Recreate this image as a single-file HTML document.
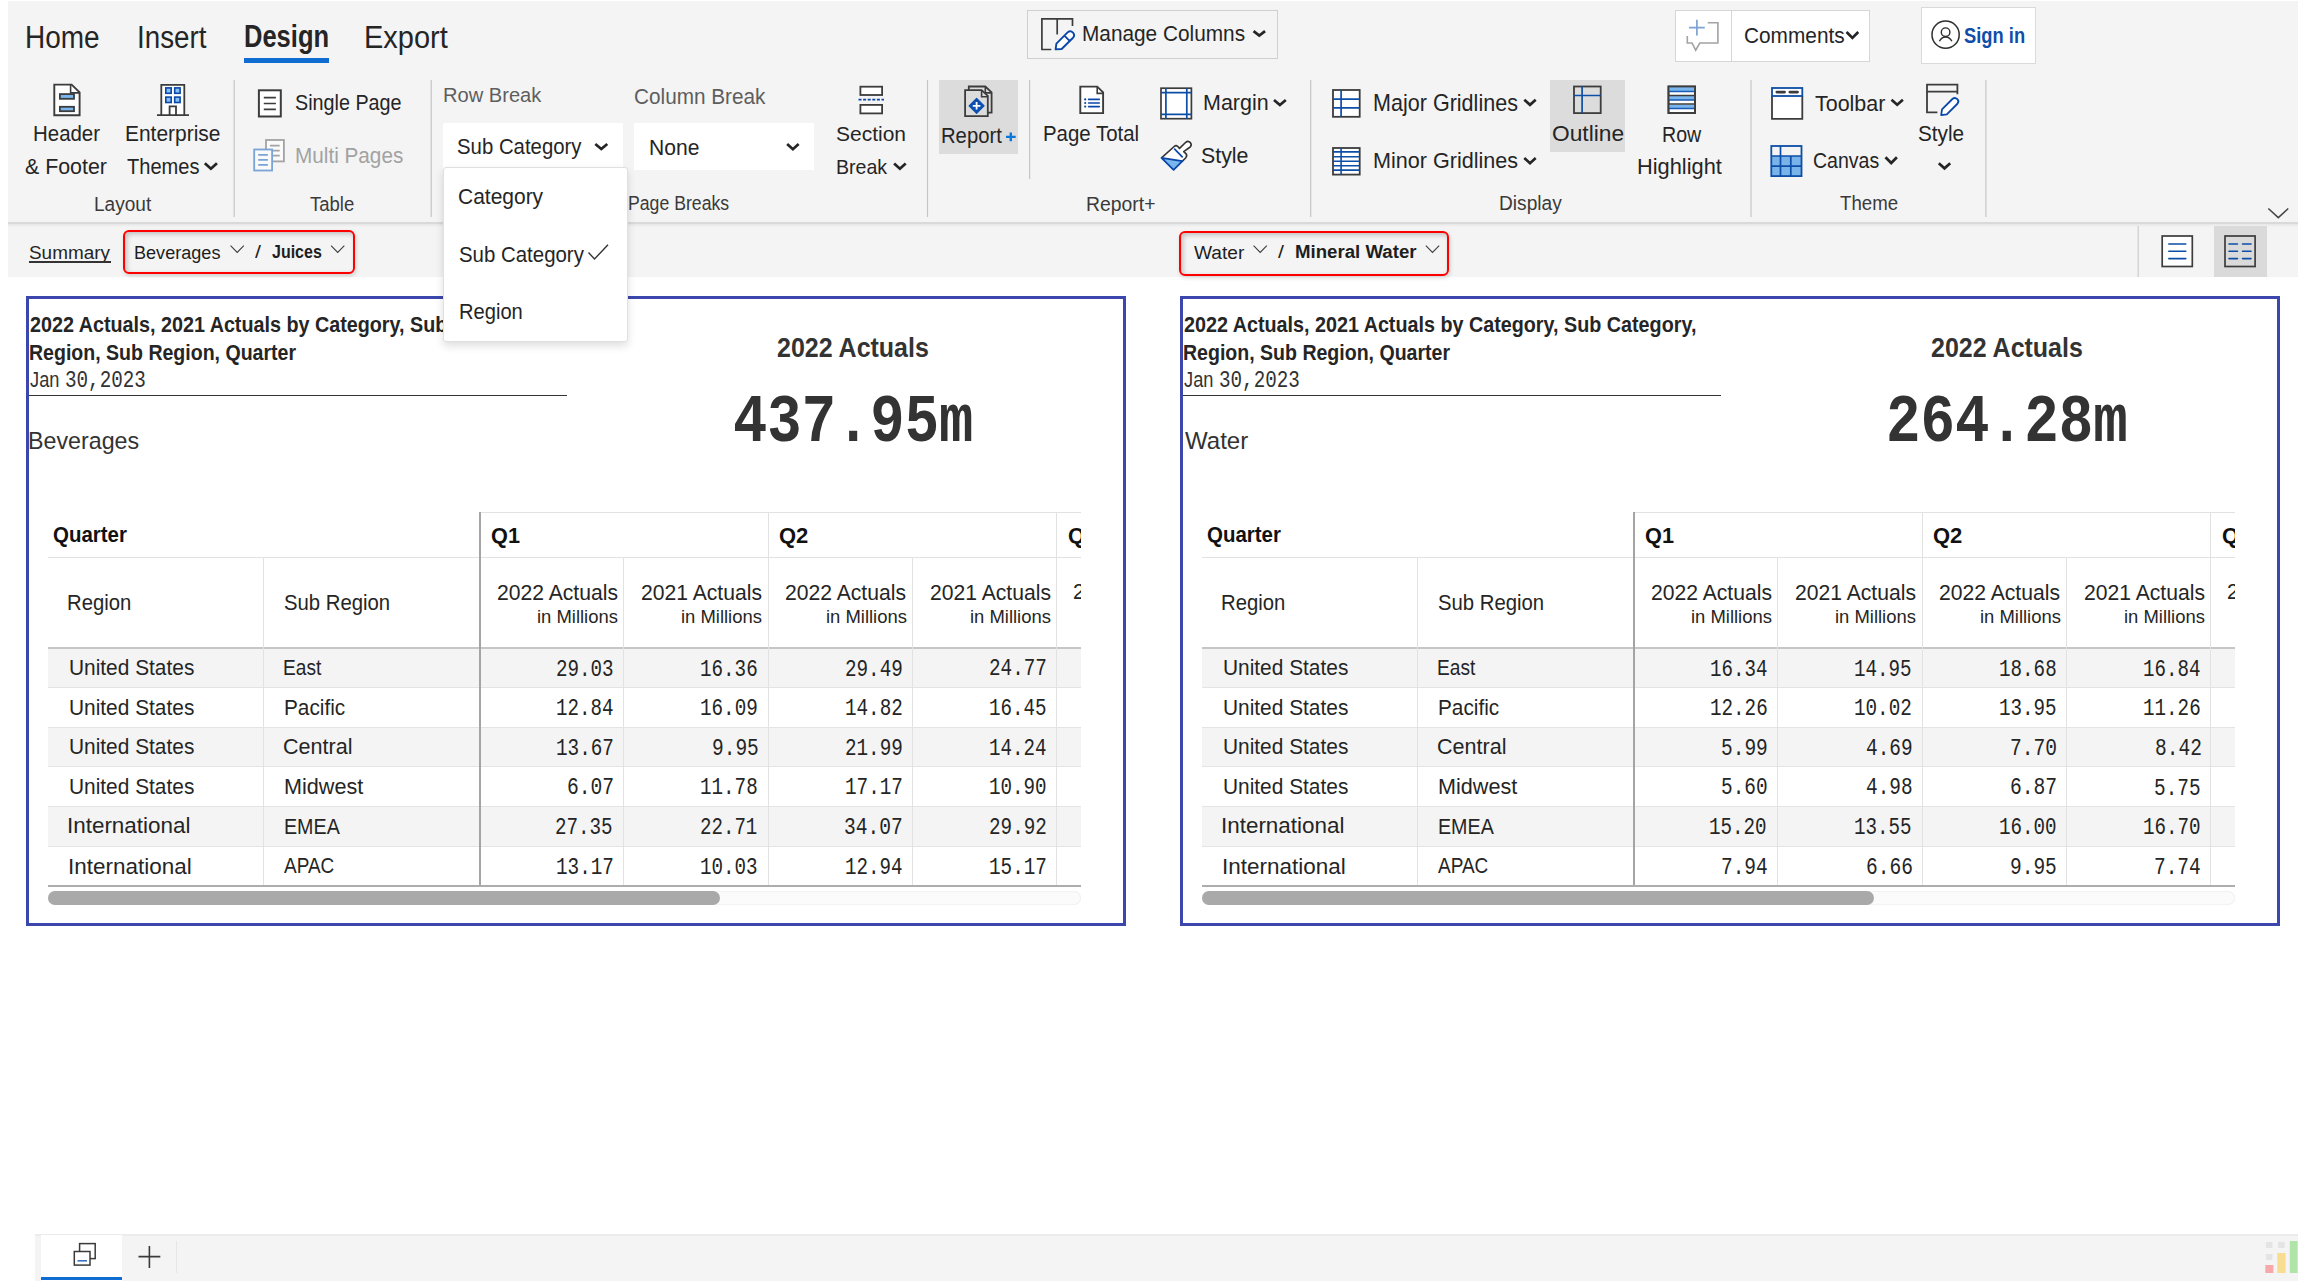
<!DOCTYPE html>
<html><head><meta charset="utf-8"><title>Report Designer</title>
<style>
html,body{margin:0;padding:0;width:2304px;height:1288px;overflow:hidden;background:#fff;}
body{position:relative;font-family:"Liberation Sans",sans-serif;color:#252525;}
.t{position:absolute;white-space:nowrap;line-height:1;transform-origin:0 0;}
.r{position:absolute;}
svg.ov{position:absolute;left:0;top:0;}
</style></head><body>
<div class="r" style="left:8px;top:1px;width:2290px;height:222px;background:#f4f4f4;"></div><div class="r" style="left:8px;top:222px;width:2290px;height:2px;background:#d9d9d9;"></div><div class="r" style="left:8px;top:224px;width:2290px;height:53px;background:#f4f4f4;"></div><div class="r" style="left:8px;top:224px;width:2290px;height:3px;background:linear-gradient(#e6e6e6,#f4f4f4);"></div><div class="t b0" style="left:25.31px;top:22.68px;font-size:30.81px;transform:scaleX(0.9082);">Home</div><div class="t b0" style="left:136.53px;top:22.68px;font-size:30.81px;transform:scaleX(0.9005);">Insert</div><div class="t b0" style="left:244.37px;top:22.25px;font-size:30.81px;transform:scaleX(0.8283);font-weight:bold;">Design</div><div class="t b0" style="left:364.48px;top:22.54px;font-size:30.81px;transform:scaleX(0.9414);">Export</div><div class="r" style="left:244px;top:58px;width:85px;height:4.5px;background:#0f6cd0;"></div><div class="r" style="left:1027px;top:10px;width:251px;height:49px;background:transparent;box-sizing:border-box;border:1px solid #cfcfcf;"></div><div class="t b0" style="left:1082.01px;top:23.40px;font-size:21.22px;transform:scaleX(0.9804);">Manage Columns</div><div class="r" style="left:1675px;top:10px;width:195px;height:52px;background:#fff;box-sizing:border-box;border:1px solid #d6d6d6;"></div><div class="r" style="left:1731px;top:10px;width:1px;height:52px;background:#d6d6d6;"></div><div class="t b0" style="left:1743.96px;top:23.58px;font-size:22.67px;transform:scaleX(0.9192);">Comments</div><div class="r" style="left:1921px;top:7px;width:115px;height:57px;background:#fff;box-sizing:border-box;border:1px solid #dadada;"></div><div class="t b0" style="left:1964.32px;top:25.08px;font-size:22.09px;transform:scaleX(0.8302);color:#0f4ea8;font-weight:bold;">Sign in</div><div class="t b0" style="left:33.49px;top:123.46px;font-size:22.09px;transform:scaleX(0.9257);">Header</div><div class="t b0" style="left:24.88px;top:155.71px;font-size:22.09px;transform:scaleX(0.9678);">&amp; Footer</div><div class="t b0" style="left:125.20px;top:123.28px;font-size:22.09px;transform:scaleX(0.9484);">Enterprise</div><div class="t b0" style="left:127.45px;top:156.06px;font-size:22.09px;transform:scaleX(0.9094);">Themes</div><div class="t b0" style="left:93.75px;top:193.59px;font-size:20.35px;transform:scaleX(0.9364);color:#3a3a3a;">Layout</div><div class="t b0" style="left:294.71px;top:92.30px;font-size:21.22px;transform:scaleX(0.9311);">Single Page</div><div class="t b0" style="left:294.72px;top:145.30px;font-size:21.22px;transform:scaleX(0.9768);color:#a2a2a2;">Multi Pages</div><div class="t b0" style="left:310.45px;top:193.91px;font-size:20.35px;transform:scaleX(0.9102);color:#3a3a3a;">Table</div><div class="t b0" style="left:442.92px;top:84.35px;font-size:21.08px;transform:scaleX(0.9540);color:#5e5e5e;">Row Break</div><div class="r" style="left:443px;top:123px;width:180px;height:47px;background:#fff;"></div><div class="t b0" style="left:457.38px;top:135.68px;font-size:21.80px;transform:scaleX(0.9340);">Sub Category</div><div class="t b0" style="left:633.64px;top:85.57px;font-size:22.53px;transform:scaleX(0.9217);color:#5e5e5e;">Column Break</div><div class="r" style="left:634px;top:123px;width:180px;height:47px;background:#fff;"></div><div class="t b0" style="left:648.66px;top:136.60px;font-size:21.95px;transform:scaleX(0.9603);">None</div><div class="t b0" style="left:835.70px;top:124.11px;font-size:20.93px;transform:scaleX(1.0033);">Section</div><div class="t b0" style="left:836.36px;top:156.56px;font-size:20.93px;transform:scaleX(0.9357);">Break</div><div class="t b0" style="left:628.36px;top:192.82px;font-size:20.35px;transform:scaleX(0.8683);color:#3a3a3a;">Page Breaks</div><div class="r" style="left:939px;top:80px;width:79px;height:74px;background:#dcdcdc;"></div><div class="t b0" style="left:940.63px;top:124.78px;font-size:21.22px;transform:scaleX(0.9540);">Report</div><div class="t b0" style="left:1043.49px;top:123.30px;font-size:21.22px;transform:scaleX(0.9624);">Page Total</div><div class="t b0" style="left:1203.31px;top:91.45px;font-size:22.97px;transform:scaleX(0.9344);">Margin</div><div class="t b0" style="left:1201.44px;top:145.12px;font-size:22.38px;transform:scaleX(0.9547);">Style</div><div class="t b0" style="left:1085.52px;top:193.54px;font-size:20.35px;transform:scaleX(0.9521);color:#3a3a3a;">Report+</div><div class="t b0" style="left:1373.15px;top:91.65px;font-size:23.26px;transform:scaleX(0.9271);">Major Gridlines</div><div class="t b0" style="left:1373.40px;top:150.44px;font-size:22.24px;transform:scaleX(0.9709);">Minor Gridlines</div><div class="r" style="left:1550px;top:80px;width:75px;height:72px;background:#dcdcdc;"></div><div class="t b0" style="left:1551.55px;top:123.46px;font-size:22.09px;transform:scaleX(1.0305);">Outline</div><div class="t b0" style="left:1661.56px;top:123.61px;font-size:22.09px;transform:scaleX(0.8878);">Row</div><div class="t b0" style="left:1637.35px;top:156.08px;font-size:22.09px;transform:scaleX(0.9875);">Highlight</div><div class="t b0" style="left:1499.12px;top:193.02px;font-size:20.35px;transform:scaleX(0.9403);color:#3a3a3a;">Display</div><div class="t b0" style="left:1815.22px;top:92.69px;font-size:22.24px;transform:scaleX(0.9650);">Toolbar</div><div class="t b0" style="left:1813.25px;top:148.78px;font-size:22.97px;transform:scaleX(0.8503);">Canvas</div><div class="t b0" style="left:1918.39px;top:122.88px;font-size:22.09px;transform:scaleX(0.9395);">Style</div><div class="t b0" style="left:1840.35px;top:193.36px;font-size:20.35px;transform:scaleX(0.9173);color:#3a3a3a;">Theme</div><svg class="ov" width="2304" height="1288" viewBox="0 0 2304 1288"><polyline points="1253.54,31.14 1259.30,35.64 1265.06,31.14" fill="none" stroke="#252525" stroke-width="2.7" stroke-linecap="butt" stroke-linejoin="miter"/><path d="M1051.3 49.5 H1041.9 V18.9 H1072.5 V26 M1057.2 18.9 V34.5" fill="none" stroke="#3c3c3c" stroke-width="1.7"/><path d="M1055.6 49.4 L1056.4 43.6 L1067.6 32.4 Q1070.4 30.0 1073.0 32.6 Q1075.4 35.3 1072.8 38.0 L1061.6 49.0 Z M1064.4 35.6 L1069.6 40.8" fill="#fff" stroke="#0b47a8" stroke-width="1.9" stroke-linejoin="round"/><polyline points="1846.55,32.05 1852.40,37.84 1858.26,32.05" fill="none" stroke="#252525" stroke-width="2.7" stroke-linecap="butt" stroke-linejoin="miter"/><path d="M1696.9 19.8 V35.5 M1689 27.7 H1704.8" stroke="#7da2d4" stroke-width="1.7" fill="none"/><path d="M1707.7 22.7 H1717.9 V43 H1699.8 L1695.7 50.2 L1692 43 H1687.3 V35.9" stroke="#a3a3a3" stroke-width="1.6" fill="none"/><circle cx="1945.6" cy="34.7" r="13.6" fill="none" stroke="#2e2e2e" stroke-width="1.5"/><circle cx="1945.6" cy="32.2" r="4.3" fill="none" stroke="#2e2e2e" stroke-width="1.4"/><path d="M1939.4 41.3 Q1941.5 37 1945.6 37 Q1949.8 37 1951.9 41.3" fill="none" stroke="#2e2e2e" stroke-width="1.4"/><line x1="234.2" y1="80" x2="234.2" y2="217" stroke="#c6c6c6" stroke-width="1.2"/><line x1="431.2" y1="80" x2="431.2" y2="217" stroke="#c6c6c6" stroke-width="1.2"/><line x1="927.5" y1="80" x2="927.5" y2="217" stroke="#c6c6c6" stroke-width="1.2"/><line x1="1029.6" y1="80" x2="1029.6" y2="179" stroke="#c6c6c6" stroke-width="1.2"/><line x1="1310.7" y1="80" x2="1310.7" y2="217" stroke="#c6c6c6" stroke-width="1.2"/><line x1="1751" y1="80" x2="1751" y2="217" stroke="#c6c6c6" stroke-width="1.2"/><line x1="1985.9" y1="80" x2="1985.9" y2="217" stroke="#c6c6c6" stroke-width="1.2"/><path d="M54.3 84.6 H71.6 L79.6 92.4 V115.3 H54.3 Z" fill="#fff" stroke="#3c3c3c" stroke-width="1.9" stroke-linejoin="miter"/><path d="M70.6 84.6 V92.9 H79.6" fill="none" stroke="#3c3c3c" stroke-width="1.6"/><rect x="59.9" y="94.1" width="14.1" height="4.7" fill="#7ab6ee" stroke="#3c3c3c" stroke-width="1.8"/><rect x="59.9" y="106.8" width="14.1" height="4.4" fill="#7ab6ee" stroke="#3c3c3c" stroke-width="1.8"/><path d="M161.3 115.2 V84.8 H184.3 V115.2 M157 115.2 H189 M169.6 115.2 V106.4 H176 V115.2" fill="#fff" stroke="#3c3c3c" stroke-width="1.8"/><rect x="165.8" y="87.9" width="5.4" height="5.4" fill="#84c0f2" stroke="#0b47a8" stroke-width="1.6"/><rect x="165.8" y="97.1" width="5.4" height="5.4" fill="#84c0f2" stroke="#0b47a8" stroke-width="1.6"/><rect x="174.7" y="87.9" width="5.4" height="5.4" fill="#84c0f2" stroke="#0b47a8" stroke-width="1.6"/><rect x="174.7" y="97.1" width="5.4" height="5.4" fill="#84c0f2" stroke="#0b47a8" stroke-width="1.6"/><polyline points="204.84,163.25 210.90,168.75 216.96,163.25" fill="none" stroke="#252525" stroke-width="2.7" stroke-linecap="butt" stroke-linejoin="miter"/><rect x="258.9" y="90.3" width="21.9" height="26.2" fill="#fff" stroke="#3c3c3c" stroke-width="2"/><path d="M263.8 97.6 H275.9 M263.8 103.5 H275.9 M263.8 109.4 H275.9" stroke="#3c3c3c" stroke-width="1.7"/><rect x="266" y="140" width="17.9" height="21.4" fill="#fafafa" stroke="#a3a3a3" stroke-width="1.8"/><path d="M270 145.7 H279.7 M270 150.6 H279.7 M270 155.7 H279.7" stroke="#a3a3a3" stroke-width="1.7"/><rect x="254.2" y="149.5" width="17.9" height="21" fill="#fafafa" stroke="#7aa3d8" stroke-width="1.8"/><path d="M258.2 154.9 H267.9 M258.2 159.9 H267.9 M258.2 164.9 H267.9" stroke="#7aa3d8" stroke-width="1.7"/><polyline points="595.29,143.90 601.30,149.09 607.30,143.90" fill="none" stroke="#252525" stroke-width="2.7" stroke-linecap="butt" stroke-linejoin="miter"/><polyline points="787.14,143.94 792.90,149.25 798.65,143.94" fill="none" stroke="#252525" stroke-width="2.7" stroke-linecap="butt" stroke-linejoin="miter"/><rect x="860.4" y="86.7" width="21.7" height="8.3" fill="#fff" stroke="#3c3c3c" stroke-width="1.8"/><rect x="860.4" y="104.9" width="21.7" height="8.5" fill="#fff" stroke="#3c3c3c" stroke-width="1.8"/><line x1="858.5" y1="99.6" x2="884" y2="99.6" stroke="#0b47a8" stroke-width="1.6" stroke-dasharray="3 1.6"/><polyline points="894.10,163.44 899.90,168.75 905.70,163.44" fill="none" stroke="#252525" stroke-width="2.7" stroke-linecap="butt" stroke-linejoin="miter"/><path d="M968.8 112.6 V86.5 H985.3 L991.6 92.4 V112.6 H987.8" fill="#dcdcdc" stroke="#3c3c3c" stroke-width="1.8"/><path d="M985.3 86.5 V92.9 H991.6" fill="none" stroke="#3c3c3c" stroke-width="1.6"/><path d="M965.1 90.2 H981.6 L987.8 95.9 V116.2 H965.1 Z" fill="#dcdcdc" stroke="#3c3c3c" stroke-width="1.8"/><path d="M981.6 90.2 V96.8 H987.8" fill="none" stroke="#3c3c3c" stroke-width="1.6"/><path d="M976.6 98.3 L984.1 105.8 L976.6 113.3 L969.1 105.8 Z" fill="#0c4fb0" stroke="#0c4fb0" stroke-width="1.2" stroke-linejoin="round"/><path d="M976.6 102 V109.6 M972.8 105.8 H980.4" stroke="#fff" stroke-width="1.8"/><path d="M1010.8 132.6 V141.2 M1006 136.9 H1015.7" stroke="#0a78d8" stroke-width="2.4"/><path d="M1080.3 86.6 H1097.2 L1103.1 92.4 V113.1 H1080.3 Z" fill="#fff" stroke="#3c3c3c" stroke-width="1.9"/><path d="M1097.2 86.6 V93.4 H1103.1" fill="none" stroke="#3c3c3c" stroke-width="1.6"/><circle cx="1085.2" cy="99.4" r="1.1" fill="#0b47a8"/><line x1="1088.6" y1="99.4" x2="1099.3" y2="99.4" stroke="#0b47a8" stroke-width="1.6" stroke-linecap="round"/><circle cx="1085.2" cy="103" r="1.1" fill="#0b47a8"/><line x1="1088.6" y1="103" x2="1099.3" y2="103" stroke="#0b47a8" stroke-width="1.6" stroke-linecap="round"/><circle cx="1085.2" cy="106.6" r="1.1" fill="#0b47a8"/><line x1="1088.6" y1="106.6" x2="1099.3" y2="106.6" stroke="#0b47a8" stroke-width="1.6" stroke-linecap="round"/><rect x="1161" y="88.2" width="30.4" height="30.5" fill="#fff" stroke="#3c3c3c" stroke-width="1.7"/><path d="M1165.9 88.2 V118.7 M1186.8 88.2 V118.7 M1161 92.6 H1191.4 M1161 114.4 H1191.4" stroke="#0d4ea6" stroke-width="1.7"/><polyline points="1274.00,100.00 1279.90,105.00 1285.81,100.00" fill="none" stroke="#252525" stroke-width="2.7" stroke-linecap="butt" stroke-linejoin="miter"/><path d="M1161.5 157.8 L1174.2 146.5 Q1176.0 144.9 1177.8 146.5 L1179.5 148.4 L1185.8 142.3 Q1188.2 140.3 1190.3 142.6 Q1192.2 144.9 1190.2 147.0 L1183.7 151.6 L1185.9 153.6 Q1187.6 155.8 1185.6 158.0 L1182.4 161.1" fill="#fff" stroke="#333" stroke-width="1.6" stroke-linejoin="round"/><path d="M1161.5 157.8 L1182.4 161.1 L1173.6 169.9 Z" fill="#7ab6ee" stroke="#0b47a8" stroke-width="1.8" stroke-linejoin="round"/><line x1="1174.2" y1="148.6" x2="1182.7" y2="157.4" stroke="#0b47a8" stroke-width="1.7"/><rect x="1333" y="90" width="26.7" height="26.8" fill="#fff" stroke="#3c3c3c" stroke-width="1.8"/><path d="M1341.1 90 V116.8 M1333 99.1 H1359.7 M1333 107.9 H1359.7" stroke="#0d4ea6" stroke-width="1.7"/><polyline points="1524.29,99.74 1530.00,104.85 1535.71,99.74" fill="none" stroke="#252525" stroke-width="2.7" stroke-linecap="butt" stroke-linejoin="miter"/><rect x="1333" y="148" width="26.7" height="26.6" fill="#fff" stroke="#3c3c3c" stroke-width="1.8"/><path d="M1341.1 148 V174.6 M1333 151.9 H1359.7 M1333 156.8 H1359.7 M1333 161.2 H1359.7 M1333 165.7 H1359.7 M1333 170.1 H1359.7" stroke="#0d4ea6" stroke-width="1.6"/><polyline points="1524.29,158.04 1530.00,163.15 1535.71,158.04" fill="none" stroke="#252525" stroke-width="2.7" stroke-linecap="butt" stroke-linejoin="miter"/><rect x="1574" y="86.5" width="26.7" height="26.6" fill="#dcdcdc" stroke="#3c3c3c" stroke-width="1.8"/><path d="M1582.1 86.5 V113.1 M1574 95.5 H1600.7" stroke="#0d4ea6" stroke-width="1.7"/><rect x="1668.5" y="86.5" width="26.5" height="26.5" fill="#fff" stroke="#3c3c3c" stroke-width="1.8"/><rect x="1668.5" y="86.5" width="26.5" height="5" fill="#7ab6ee"/><rect x="1668.5" y="96" width="26.5" height="4" fill="#7ab6ee"/><rect x="1668.5" y="104.5" width="26.5" height="4" fill="#7ab6ee"/><path d="M1668.5 91.5 H1695 M1668.5 100 H1695 M1668.5 108.5 H1695" stroke="#1a5bb5" stroke-width="1.5"/><path d="M1668.5 95.4 H1695 M1668.5 104 H1695" stroke="#3c3c3c" stroke-width="1.5"/><rect x="1668.5" y="86.5" width="26.5" height="26.5" fill="none" stroke="#3c3c3c" stroke-width="1.8"/><path d="M1772 96 V118.8 H1802.3 V96" fill="#fff" stroke="#3c3c3c" stroke-width="1.8"/><rect x="1772" y="88" width="30.3" height="8" fill="#fff" stroke="#0d4ea6" stroke-width="1.8"/><path d="M1776.8 92.1 H1784.6 M1789.8 92.1 H1797.6" stroke="#3c3c3c" stroke-width="2.6" stroke-linecap="round"/><polyline points="1891.49,99.69 1897.20,104.69 1902.91,99.69" fill="none" stroke="#252525" stroke-width="2.7" stroke-linecap="butt" stroke-linejoin="miter"/><rect x="1771.3" y="156" width="30.2" height="20.1" fill="#78b4ea"/><rect x="1771.3" y="146" width="30.2" height="30.1" fill="none" stroke="#0d4ea6" stroke-width="1.8"/><path d="M1771.3 156 H1801.5 M1771.3 166.1 H1801.5 M1780.5 146 V176.1 M1790.8 156 V176.1" stroke="#0d4ea6" stroke-width="1.7"/><polyline points="1885.49,157.19 1891.20,163.00 1896.91,157.19" fill="none" stroke="#252525" stroke-width="2.7" stroke-linecap="butt" stroke-linejoin="miter"/><path d="M1937.4 112.3 H1927 V84.6 H1957.4 V94.3 M1927 91.6 H1957.4" fill="none" stroke="#3c3c3c" stroke-width="1.8"/><path d="M1941.2 115.2 L1942.0 109.4 L1952.4 99.0 Q1955.0 96.8 1957.3 99.2 Q1959.6 101.6 1957.2 104.0 L1946.8 114.4 Z" fill="#fff" stroke="#0b47a8" stroke-width="1.8" stroke-linejoin="round"/><polyline points="1938.79,163.24 1944.50,168.34 1950.21,163.24" fill="none" stroke="#252525" stroke-width="2.7" stroke-linecap="butt" stroke-linejoin="miter"/><polyline points="2268.33,208.53 2278.30,217.63 2288.28,208.53" fill="none" stroke="#444" stroke-width="1.5" stroke-linecap="butt" stroke-linejoin="miter"/></svg><div class="t b0" style="left:29.27px;top:243.63px;font-size:18.90px;transform:scaleX(1.0012);">Summary</div><div class="r" style="left:29px;top:261px;width:82px;height:1.5px;background:#333;"></div><div class="r" style="left:122.7px;top:230px;width:232.3px;height:44px;box-sizing:border-box;border:2.8px solid #ff0000;border-radius:6px;box-shadow:inset 2px 2px 5px rgba(0,0,0,0.22), 1px 2px 4px rgba(0,0,0,0.15);"></div><div class="t b0" style="left:134.28px;top:242.77px;font-size:19.19px;transform:scaleX(0.9423);color:#1e1e1e;">Beverages</div><div class="t b0" style="left:254.60px;top:242.36px;font-size:19.19px;transform:scaleX(1.1169);color:#1e1e1e;">/</div><div class="t b0" style="left:271.61px;top:242.36px;font-size:19.19px;transform:scaleX(0.8333);font-weight:bold;color:#1e1e1e;">Juices</div><div class="r" style="left:1179px;top:230.5px;width:270px;height:45.69999999999999px;box-sizing:border-box;border:2.8px solid #ff0000;border-radius:6px;box-shadow:inset 2px 2px 5px rgba(0,0,0,0.22), 1px 2px 4px rgba(0,0,0,0.15);"></div><div class="t b0" style="left:1193.70px;top:242.88px;font-size:19.19px;transform:scaleX(0.9985);color:#1e1e1e;">Water</div><div class="t b0" style="left:1278.00px;top:242.36px;font-size:19.19px;transform:scaleX(1.1169);color:#1e1e1e;">/</div><div class="t b0" style="left:1294.59px;top:242.36px;font-size:19.19px;transform:scaleX(0.9713);font-weight:bold;color:#1e1e1e;">Mineral Water</div><div class="r" style="left:2213.5px;top:226px;width:53.5px;height:51px;background:#dadada;"></div><svg class="ov" width="2304" height="1288" viewBox="0 0 2304 1288"><polyline points="230.57,245.67 237.20,252.42 243.83,245.67" fill="none" stroke="#3a3a3a" stroke-width="1.05" stroke-linecap="butt" stroke-linejoin="miter"/><polyline points="331.07,245.67 337.70,252.42 344.33,245.67" fill="none" stroke="#3a3a3a" stroke-width="1.05" stroke-linecap="butt" stroke-linejoin="miter"/><polyline points="1253.57,245.67 1260.20,252.42 1266.83,245.67" fill="none" stroke="#3a3a3a" stroke-width="1.05" stroke-linecap="butt" stroke-linejoin="miter"/><polyline points="1425.87,245.67 1432.50,252.42 1439.13,245.67" fill="none" stroke="#3a3a3a" stroke-width="1.05" stroke-linecap="butt" stroke-linejoin="miter"/><line x1="2138.2" y1="226" x2="2138.2" y2="277" stroke="#cdcdcd" stroke-width="1.2"/><rect x="2162.2" y="236" width="30.1" height="30.5" fill="#fff" stroke="#3c3c3c" stroke-width="1.7"/><path d="M2168.8 244 H2185.8 M2168.8 251.3 H2185.8 M2168.8 258.6 H2185.8" stroke="#0d4ea6" stroke-width="1.6" stroke-linecap="round"/><rect x="2225" y="236" width="30.1" height="30.5" fill="#dadada" stroke="#3c3c3c" stroke-width="1.7"/><path d="M2229 244 H2237.5 M2242.5 244 H2251 M2229 251.3 H2237.5 M2242.5 251.3 H2251 M2229 258.6 H2237.5 M2242.5 258.6 H2251" stroke="#0d4ea6" stroke-width="1.6" stroke-linecap="round"/></svg><div class="r" style="left:26px;top:296px;width:1100px;height:630px;box-sizing:border-box;border:3px solid #3b47ad;"></div><div class="t b0" style="left:29.93px;top:315.10px;font-size:21.37px;transform:scaleX(0.9243);font-weight:bold;">2022 Actuals, 2021 Actuals by Category, Sub Category,</div><div class="t b1" style="left:28.73px;top:342.90px;font-size:21.37px;transform:scaleX(0.9147);font-weight:bold;">Region, Sub Region, Quarter</div><div class="t b0" style="left:30.03px;top:368.67px;font-size:21.80px;transform:scaleX(0.8373);color:#333;">Jan</div><div class="t b2" style="left:64.67px;top:369.84px;font-size:23.08px;transform:scaleX(0.8339);color:#333;font-family:'Liberation Mono',monospace;">30,2023</div><div class="r" style="left:29px;top:394.5px;width:538px;height:1.4px;background:#333;"></div><div class="t b0" style="left:28.26px;top:429.41px;font-size:24.27px;transform:scaleX(0.9583);color:#333;">Beverages</div><div class="t b0" style="left:777.43px;top:334.49px;font-size:27.91px;transform:scaleX(0.8953);font-weight:bold;color:#333;">2022 Actuals</div><div class="t b0" style="left:733.15px;top:388.32px;font-size:69.23px;transform:scaleX(0.8265);font-weight:bold;color:#333;font-family:'Liberation Mono',monospace;">437.95m</div><div class="r" style="left:47.5px;top:500px;width:1033.8px;height:420px;overflow:hidden;"><div class="r" style="left:0.0px;top:149px;width:1100px;height:38px;background:#f4f4f4;"></div><div class="r" style="left:0.0px;top:227px;width:1100px;height:39px;background:#f4f4f4;"></div><div class="r" style="left:0.0px;top:306px;width:1100px;height:40px;background:#f4f4f4;"></div><div class="r" style="left:431.5px;top:12px;width:700px;height:1px;background:#e2e2e2;"></div><div class="r" style="left:0.0px;top:57px;width:1100px;height:1px;background:#e2e2e2;"></div><div class="r" style="left:0.0px;top:147px;width:1100px;height:2px;background:#c6c6c6;"></div><div class="r" style="left:0.0px;top:187px;width:1100px;height:1px;background:#e4e4e4;"></div><div class="r" style="left:0.0px;top:226.5px;width:1100px;height:1px;background:#e4e4e4;"></div><div class="r" style="left:0.0px;top:266px;width:1100px;height:1px;background:#e4e4e4;"></div><div class="r" style="left:0.0px;top:306px;width:1100px;height:1px;background:#e4e4e4;"></div><div class="r" style="left:0.0px;top:346px;width:1100px;height:1px;background:#e4e4e4;"></div><div class="r" style="left:0.0px;top:385px;width:1100px;height:1.5px;background:#adadad;"></div><div class="r" style="left:215.5px;top:57px;width:1px;height:328px;background:#e2e2e2;"></div><div class="r" style="left:431.5px;top:12px;width:1.5px;height:373px;background:#a4a4a4;"></div><div class="r" style="left:575.5px;top:57px;width:1px;height:328px;background:#e2e2e2;"></div><div class="r" style="left:864.0px;top:57px;width:1px;height:328px;background:#e2e2e2;"></div><div class="r" style="left:720.0px;top:12px;width:1px;height:373px;background:#e2e2e2;"></div><div class="r" style="left:1008.5px;top:12px;width:1px;height:373px;background:#e2e2e2;"></div><div class="t b0" style="left:5.16px;top:24.83px;font-size:21.51px;transform:scaleX(0.9522);font-weight:bold;color:#111;">Quarter</div><div class="t b0" style="left:443.16px;top:25.58px;font-size:21.51px;transform:scaleX(1.0092);font-weight:bold;color:#111;">Q1</div><div class="t b0" style="left:731.70px;top:25.58px;font-size:21.51px;transform:scaleX(1.0213);font-weight:bold;color:#111;">Q2</div><div class="t b0" style="left:1020.23px;top:25.58px;font-size:21.51px;transform:scaleX(1.0146);font-weight:bold;color:#111;">Q3</div><div class="t b0" style="left:19.88px;top:91.53px;font-size:21.80px;transform:scaleX(0.9299);">Region</div><div class="t b0" style="left:236.14px;top:91.53px;font-size:21.80px;transform:scaleX(0.9317);">Sub Region</div><div class="t b0" style="left:449.04px;top:81.52px;font-size:22.53px;transform:scaleX(0.9382);">2022 Actuals</div><div class="t b1" style="left:489.33px;top:107.81px;font-size:18.02px;transform:scaleX(1.0233);">in Millions</div><div class="t b0" style="left:593.39px;top:81.52px;font-size:22.53px;transform:scaleX(0.9382);">2021 Actuals</div><div class="t b1" style="left:633.18px;top:107.81px;font-size:18.02px;transform:scaleX(1.0233);">in Millions</div><div class="t b0" style="left:737.79px;top:81.52px;font-size:22.53px;transform:scaleX(0.9382);">2022 Actuals</div><div class="t b1" style="left:778.08px;top:107.81px;font-size:18.02px;transform:scaleX(1.0233);">in Millions</div><div class="t b0" style="left:882.39px;top:81.52px;font-size:22.53px;transform:scaleX(0.9382);">2021 Actuals</div><div class="t b1" style="left:922.18px;top:107.81px;font-size:18.02px;transform:scaleX(1.0233);">in Millions</div><div class="t b0" style="left:1025.09px;top:81.27px;font-size:22.53px;transform:scaleX(0.9412);">2022 Actuals</div><div class="t b0" style="left:21.01px;top:156.80px;font-size:21.95px;transform:scaleX(0.9516);">United States</div><div class="t b0" style="left:235.77px;top:156.89px;font-size:21.95px;transform:scaleX(0.8724);">East</div><div class="t b0" style="left:508.12px;top:158.52px;font-size:23.23px;transform:scaleX(0.8269);font-family:'Liberation Mono',monospace;">29.03</div><div class="t b0" style="left:652.21px;top:158.52px;font-size:23.23px;transform:scaleX(0.8283);font-family:'Liberation Mono',monospace;">16.36</div><div class="t b0" style="left:797.31px;top:158.52px;font-size:23.23px;transform:scaleX(0.8298);font-family:'Liberation Mono',monospace;">29.49</div><div class="t b0" style="left:941.16px;top:157.64px;font-size:23.23px;transform:scaleX(0.8312);font-family:'Liberation Mono',monospace;">24.77</div><div class="t b0" style="left:21.01px;top:196.55px;font-size:21.95px;transform:scaleX(0.9516);">United States</div><div class="t b0" style="left:236.14px;top:196.55px;font-size:21.95px;transform:scaleX(0.9468);">Pacific</div><div class="t b0" style="left:508.12px;top:197.77px;font-size:23.23px;transform:scaleX(0.8240);font-family:'Liberation Mono',monospace;">12.84</div><div class="t b0" style="left:652.21px;top:197.77px;font-size:23.23px;transform:scaleX(0.8298);font-family:'Liberation Mono',monospace;">16.09</div><div class="t b0" style="left:797.31px;top:197.77px;font-size:23.23px;transform:scaleX(0.8298);font-family:'Liberation Mono',monospace;">14.82</div><div class="t b0" style="left:941.17px;top:197.77px;font-size:23.23px;transform:scaleX(0.8269);font-family:'Liberation Mono',monospace;">16.45</div><div class="t b0" style="left:21.01px;top:236.30px;font-size:21.95px;transform:scaleX(0.9516);">United States</div><div class="t b0" style="left:235.85px;top:236.30px;font-size:21.95px;transform:scaleX(0.9821);">Central</div><div class="t b0" style="left:508.11px;top:237.52px;font-size:23.23px;transform:scaleX(0.8312);font-family:'Liberation Mono',monospace;">13.67</div><div class="t b0" style="left:664.13px;top:237.52px;font-size:23.23px;transform:scaleX(0.8400);font-family:'Liberation Mono',monospace;">9.95</div><div class="t b0" style="left:797.31px;top:237.52px;font-size:23.23px;transform:scaleX(0.8298);font-family:'Liberation Mono',monospace;">21.99</div><div class="t b0" style="left:941.17px;top:237.64px;font-size:23.23px;transform:scaleX(0.8240);font-family:'Liberation Mono',monospace;">14.24</div><div class="t b0" style="left:21.01px;top:276.05px;font-size:21.95px;transform:scaleX(0.9516);">United States</div><div class="t b0" style="left:236.20px;top:276.05px;font-size:21.95px;transform:scaleX(0.9843);">Midwest</div><div class="t b0" style="left:519.27px;top:277.27px;font-size:23.23px;transform:scaleX(0.8460);font-family:'Liberation Mono',monospace;">6.07</div><div class="t b0" style="left:652.21px;top:277.27px;font-size:23.23px;transform:scaleX(0.8283);font-family:'Liberation Mono',monospace;">11.78</div><div class="t b0" style="left:797.31px;top:277.27px;font-size:23.23px;transform:scaleX(0.8312);font-family:'Liberation Mono',monospace;">17.17</div><div class="t b0" style="left:941.17px;top:277.27px;font-size:23.23px;transform:scaleX(0.8269);font-family:'Liberation Mono',monospace;">10.90</div><div class="t b0" style="left:19.61px;top:315.47px;font-size:21.95px;transform:scaleX(1.0222);">International</div><div class="t b0" style="left:236.30px;top:315.72px;font-size:21.95px;transform:scaleX(0.8967);">EMEA</div><div class="t b0" style="left:507.90px;top:316.95px;font-size:23.23px;transform:scaleX(0.8274);font-family:'Liberation Mono',monospace;">27.35</div><div class="t b0" style="left:652.31px;top:316.81px;font-size:23.23px;transform:scaleX(0.8231);font-family:'Liberation Mono',monospace;">22.71</div><div class="t b0" style="left:796.87px;top:316.95px;font-size:23.23px;transform:scaleX(0.8436);font-family:'Liberation Mono',monospace;">34.07</div><div class="t b0" style="left:941.35px;top:316.95px;font-size:23.23px;transform:scaleX(0.8303);font-family:'Liberation Mono',monospace;">29.92</div><div class="t b0" style="left:20.05px;top:355.55px;font-size:21.95px;transform:scaleX(1.0239);">International</div><div class="t b0" style="left:236.93px;top:355.33px;font-size:21.95px;transform:scaleX(0.8648);">APAC</div><div class="t b0" style="left:508.11px;top:356.77px;font-size:23.23px;transform:scaleX(0.8312);font-family:'Liberation Mono',monospace;">13.17</div><div class="t b0" style="left:652.22px;top:356.77px;font-size:23.23px;transform:scaleX(0.8269);font-family:'Liberation Mono',monospace;">10.03</div><div class="t b0" style="left:797.32px;top:356.77px;font-size:23.23px;transform:scaleX(0.8240);font-family:'Liberation Mono',monospace;">12.94</div><div class="t b0" style="left:941.16px;top:356.64px;font-size:23.23px;transform:scaleX(0.8312);font-family:'Liberation Mono',monospace;">15.17</div></div><div class="r" style="left:47.5px;top:890.5px;width:1033.1px;height:14px;border-radius:7px;background:#fbfbfb;box-shadow:inset 0 0 2px rgba(0,0,0,0.12);"></div><div class="r" style="left:47.5px;top:890.8px;width:672.0px;height:13.8px;border-radius:7px;background:#a9a9a9;"></div><div class="r" style="left:1180px;top:296px;width:1100px;height:630px;box-sizing:border-box;border:3px solid #3b47ad;"></div><div class="t b0" style="left:1183.93px;top:315.10px;font-size:21.37px;transform:scaleX(0.9243);font-weight:bold;">2022 Actuals, 2021 Actuals by Category, Sub Category,</div><div class="t b1" style="left:1182.73px;top:342.90px;font-size:21.37px;transform:scaleX(0.9147);font-weight:bold;">Region, Sub Region, Quarter</div><div class="t b0" style="left:1184.03px;top:368.67px;font-size:21.80px;transform:scaleX(0.8373);color:#333;">Jan</div><div class="t b2" style="left:1218.67px;top:369.84px;font-size:23.08px;transform:scaleX(0.8339);color:#333;font-family:'Liberation Mono',monospace;">30,2023</div><div class="r" style="left:1183px;top:394.5px;width:538px;height:1.4px;background:#333;"></div><div class="t b0" style="left:1184.50px;top:429.45px;font-size:24.27px;transform:scaleX(0.9899);color:#333;">Water</div><div class="t b0" style="left:1931.43px;top:334.49px;font-size:27.91px;transform:scaleX(0.8953);font-weight:bold;color:#333;">2022 Actuals</div><div class="t b0" style="left:1886.20px;top:388.32px;font-size:69.23px;transform:scaleX(0.8315);font-weight:bold;color:#333;font-family:'Liberation Mono',monospace;">264.28m</div><div class="r" style="left:1201.5px;top:500px;width:1033.8px;height:420px;overflow:hidden;"><div class="r" style="left:0.0px;top:149px;width:1100px;height:38px;background:#f4f4f4;"></div><div class="r" style="left:0.0px;top:227px;width:1100px;height:39px;background:#f4f4f4;"></div><div class="r" style="left:0.0px;top:306px;width:1100px;height:40px;background:#f4f4f4;"></div><div class="r" style="left:431.5px;top:12px;width:700px;height:1px;background:#e2e2e2;"></div><div class="r" style="left:0.0px;top:57px;width:1100px;height:1px;background:#e2e2e2;"></div><div class="r" style="left:0.0px;top:147px;width:1100px;height:2px;background:#c6c6c6;"></div><div class="r" style="left:0.0px;top:187px;width:1100px;height:1px;background:#e4e4e4;"></div><div class="r" style="left:0.0px;top:226.5px;width:1100px;height:1px;background:#e4e4e4;"></div><div class="r" style="left:0.0px;top:266px;width:1100px;height:1px;background:#e4e4e4;"></div><div class="r" style="left:0.0px;top:306px;width:1100px;height:1px;background:#e4e4e4;"></div><div class="r" style="left:0.0px;top:346px;width:1100px;height:1px;background:#e4e4e4;"></div><div class="r" style="left:0.0px;top:385px;width:1100px;height:1.5px;background:#adadad;"></div><div class="r" style="left:215.5px;top:57px;width:1px;height:328px;background:#e2e2e2;"></div><div class="r" style="left:431.5px;top:12px;width:1.5px;height:373px;background:#a4a4a4;"></div><div class="r" style="left:575.5px;top:57px;width:1px;height:328px;background:#e2e2e2;"></div><div class="r" style="left:864.0px;top:57px;width:1px;height:328px;background:#e2e2e2;"></div><div class="r" style="left:720.0px;top:12px;width:1px;height:373px;background:#e2e2e2;"></div><div class="r" style="left:1008.5px;top:12px;width:1px;height:373px;background:#e2e2e2;"></div><div class="t b0" style="left:5.16px;top:24.83px;font-size:21.51px;transform:scaleX(0.9522);font-weight:bold;color:#111;">Quarter</div><div class="t b0" style="left:443.16px;top:25.58px;font-size:21.51px;transform:scaleX(1.0092);font-weight:bold;color:#111;">Q1</div><div class="t b0" style="left:731.70px;top:25.58px;font-size:21.51px;transform:scaleX(1.0213);font-weight:bold;color:#111;">Q2</div><div class="t b0" style="left:1020.23px;top:25.58px;font-size:21.51px;transform:scaleX(1.0146);font-weight:bold;color:#111;">Q3</div><div class="t b0" style="left:19.88px;top:91.53px;font-size:21.80px;transform:scaleX(0.9299);">Region</div><div class="t b0" style="left:236.14px;top:91.53px;font-size:21.80px;transform:scaleX(0.9317);">Sub Region</div><div class="t b0" style="left:449.04px;top:81.52px;font-size:22.53px;transform:scaleX(0.9382);">2022 Actuals</div><div class="t b1" style="left:489.33px;top:107.81px;font-size:18.02px;transform:scaleX(1.0233);">in Millions</div><div class="t b0" style="left:593.39px;top:81.52px;font-size:22.53px;transform:scaleX(0.9382);">2021 Actuals</div><div class="t b1" style="left:633.18px;top:107.81px;font-size:18.02px;transform:scaleX(1.0233);">in Millions</div><div class="t b0" style="left:737.79px;top:81.52px;font-size:22.53px;transform:scaleX(0.9382);">2022 Actuals</div><div class="t b1" style="left:778.08px;top:107.81px;font-size:18.02px;transform:scaleX(1.0233);">in Millions</div><div class="t b0" style="left:882.39px;top:81.52px;font-size:22.53px;transform:scaleX(0.9382);">2021 Actuals</div><div class="t b1" style="left:922.18px;top:107.81px;font-size:18.02px;transform:scaleX(1.0233);">in Millions</div><div class="t b0" style="left:1025.09px;top:81.27px;font-size:22.53px;transform:scaleX(0.9412);">2022 Actuals</div><div class="t b0" style="left:21.01px;top:156.80px;font-size:21.95px;transform:scaleX(0.9516);">United States</div><div class="t b0" style="left:235.77px;top:156.89px;font-size:21.95px;transform:scaleX(0.8724);">East</div><div class="t b0" style="left:508.12px;top:158.52px;font-size:23.23px;transform:scaleX(0.8240);font-family:'Liberation Mono',monospace;">16.34</div><div class="t b0" style="left:652.22px;top:158.52px;font-size:23.23px;transform:scaleX(0.8269);font-family:'Liberation Mono',monospace;">14.95</div><div class="t b0" style="left:797.31px;top:158.52px;font-size:23.23px;transform:scaleX(0.8283);font-family:'Liberation Mono',monospace;">18.68</div><div class="t b0" style="left:941.17px;top:158.52px;font-size:23.23px;transform:scaleX(0.8240);font-family:'Liberation Mono',monospace;">16.84</div><div class="t b0" style="left:21.01px;top:196.55px;font-size:21.95px;transform:scaleX(0.9516);">United States</div><div class="t b0" style="left:236.14px;top:196.55px;font-size:21.95px;transform:scaleX(0.9468);">Pacific</div><div class="t b0" style="left:508.11px;top:197.77px;font-size:23.23px;transform:scaleX(0.8283);font-family:'Liberation Mono',monospace;">12.26</div><div class="t b0" style="left:652.21px;top:197.77px;font-size:23.23px;transform:scaleX(0.8298);font-family:'Liberation Mono',monospace;">10.02</div><div class="t b0" style="left:797.32px;top:197.77px;font-size:23.23px;transform:scaleX(0.8269);font-family:'Liberation Mono',monospace;">13.95</div><div class="t b0" style="left:941.16px;top:197.77px;font-size:23.23px;transform:scaleX(0.8283);font-family:'Liberation Mono',monospace;">11.26</div><div class="t b0" style="left:21.01px;top:236.30px;font-size:21.95px;transform:scaleX(0.9516);">United States</div><div class="t b0" style="left:235.85px;top:236.30px;font-size:21.95px;transform:scaleX(0.9821);">Central</div><div class="t b0" style="left:519.22px;top:237.52px;font-size:23.23px;transform:scaleX(0.8400);font-family:'Liberation Mono',monospace;">5.99</div><div class="t b0" style="left:664.02px;top:237.52px;font-size:23.23px;transform:scaleX(0.8363);font-family:'Liberation Mono',monospace;">4.69</div><div class="t b0" style="left:808.38px;top:237.52px;font-size:23.23px;transform:scaleX(0.8423);font-family:'Liberation Mono',monospace;">7.70</div><div class="t b0" style="left:953.17px;top:237.52px;font-size:23.23px;transform:scaleX(0.8418);font-family:'Liberation Mono',monospace;">8.42</div><div class="t b0" style="left:21.01px;top:276.05px;font-size:21.95px;transform:scaleX(0.9516);">United States</div><div class="t b0" style="left:236.20px;top:276.05px;font-size:21.95px;transform:scaleX(0.9843);">Midwest</div><div class="t b0" style="left:519.23px;top:277.27px;font-size:23.23px;transform:scaleX(0.8363);font-family:'Liberation Mono',monospace;">5.60</div><div class="t b0" style="left:664.03px;top:277.27px;font-size:23.23px;transform:scaleX(0.8345);font-family:'Liberation Mono',monospace;">4.98</div><div class="t b0" style="left:808.47px;top:277.27px;font-size:23.23px;transform:scaleX(0.8460);font-family:'Liberation Mono',monospace;">6.87</div><div class="t b0" style="left:952.78px;top:277.64px;font-size:23.23px;transform:scaleX(0.8363);font-family:'Liberation Mono',monospace;">5.75</div><div class="t b0" style="left:19.61px;top:315.47px;font-size:21.95px;transform:scaleX(1.0222);">International</div><div class="t b0" style="left:236.30px;top:315.72px;font-size:21.95px;transform:scaleX(0.8967);">EMEA</div><div class="t b0" style="left:507.90px;top:316.95px;font-size:23.23px;transform:scaleX(0.8274);font-family:'Liberation Mono',monospace;">15.20</div><div class="t b0" style="left:652.30px;top:316.95px;font-size:23.23px;transform:scaleX(0.8274);font-family:'Liberation Mono',monospace;">13.55</div><div class="t b0" style="left:797.20px;top:316.95px;font-size:23.23px;transform:scaleX(0.8274);font-family:'Liberation Mono',monospace;">16.00</div><div class="t b0" style="left:941.35px;top:316.95px;font-size:23.23px;transform:scaleX(0.8274);font-family:'Liberation Mono',monospace;">16.70</div><div class="t b0" style="left:20.05px;top:355.55px;font-size:21.95px;transform:scaleX(1.0239);">International</div><div class="t b0" style="left:236.92px;top:355.33px;font-size:21.95px;transform:scaleX(0.8648);">APAC</div><div class="t b0" style="left:519.43px;top:356.77px;font-size:23.23px;transform:scaleX(0.8386);font-family:'Liberation Mono',monospace;">7.94</div><div class="t b0" style="left:664.13px;top:356.77px;font-size:23.23px;transform:scaleX(0.8418);font-family:'Liberation Mono',monospace;">6.66</div><div class="t b0" style="left:808.73px;top:356.77px;font-size:23.23px;transform:scaleX(0.8400);font-family:'Liberation Mono',monospace;">9.95</div><div class="t b0" style="left:952.98px;top:356.77px;font-size:23.23px;transform:scaleX(0.8386);font-family:'Liberation Mono',monospace;">7.74</div></div><div class="r" style="left:1201.5px;top:890.5px;width:1033.1px;height:14px;border-radius:7px;background:#fbfbfb;box-shadow:inset 0 0 2px rgba(0,0,0,0.12);"></div><div class="r" style="left:1201.5px;top:890.8px;width:672.0px;height:13.8px;border-radius:7px;background:#a9a9a9;"></div><div class="r" style="left:35px;top:1234px;width:2263px;height:47px;background:#f4f4f4;"></div><div class="r" style="left:35px;top:1234px;width:2263px;height:2px;background:#ececec;"></div><div class="r" style="left:41px;top:1235px;width:81px;height:46px;background:#fff;"></div><div class="r" style="left:41px;top:1276.5px;width:81px;height:3.8px;background:#0f6cd0;"></div><svg class="ov" width="2304" height="1288" viewBox="0 0 2304 1288"><rect x="79.6" y="1243.6" width="15.6" height="15" fill="#fff" stroke="#3a3a3a" stroke-width="1.5"/><rect x="74.3" y="1251.5" width="15.7" height="13.6" fill="#fff" stroke="#3a3a3a" stroke-width="1.5"/><line x1="77.5" y1="1260.8" x2="87" y2="1260.8" stroke="#3a74c8" stroke-width="1.6"/><path d="M149.4 1246 V1268 M138.5 1256.6 H160.3" stroke="#3a3a3a" stroke-width="1.6"/><line x1="176.5" y1="1241" x2="176.5" y2="1273" stroke="#e6e6e6" stroke-width="1"/><rect x="2266" y="1242" width="6.5" height="6" fill="#e4e4e4"/><rect x="2278" y="1242" width="6.7" height="6" fill="#e4e4e4"/><rect x="2266" y="1254" width="6.5" height="6" fill="#e4e4e4"/><rect x="2265.3" y="1265" width="8.1" height="8" fill="#f8a8a8"/><rect x="2277.3" y="1253" width="8.3" height="20" fill="#f8dc90"/><rect x="2289.8" y="1241" width="7.8" height="32" fill="#b0e4a8"/></svg><div class="r" style="left:443px;top:166.5px;width:184.5px;height:175px;box-sizing:border-box;background:#fff;border:1px solid #e0e0e0;border-radius:3px;box-shadow:0 4px 9px rgba(0,0,0,0.13);"></div><div class="t b0" style="left:458.48px;top:185.83px;font-size:21.80px;transform:scaleX(0.9622);">Category</div><div class="t b0" style="left:458.73px;top:243.63px;font-size:21.80px;transform:scaleX(0.9370);">Sub Category</div><div class="t b1" style="left:458.79px;top:301.23px;font-size:21.80px;transform:scaleX(0.9236);">Region</div><svg class="ov" width="2304" height="1288" viewBox="0 0 2304 1288"><polyline points="588.5,252.5 594.5,259 608,244.8" fill="none" stroke="#333" stroke-width="1.4"/></svg>
</body></html>
